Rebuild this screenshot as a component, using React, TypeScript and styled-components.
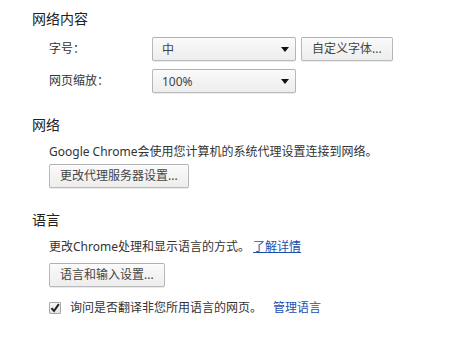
import styled, { createGlobalStyle } from "styled-components";

const GlobalStyle = createGlobalStyle`
  body {
    margin: 0;
    background: #fff;
    font-family: "Noto Sans", "Noto Sans CJK SC", sans-serif;
    font-size: 12px;
    color: #333;
  }
`;

const App = () => {
  return (
    <Page>
      <GlobalStyle />
      <Section>
        <Heading>网络内容</Heading>
        <FormGrid>
          <Label>字号：</Label>
          <Controls>
            <Select $width={144}>
              <span>中</span>
              <Arrow />
            </Select>
            <Button>自定义字体...</Button>
          </Controls>
          <Label>网页缩放：</Label>
          <Controls>
            <Select $width={144}>
              <span>100%</span>
              <Arrow />
            </Select>
          </Controls>
        </FormGrid>
      </Section>

      <Section>
        <Heading>网络</Heading>
        <Body>
          <Text>Google Chrome会使用您计算机的系统代理设置连接到网络。</Text>
          <Button $top={3}>更改代理服务器设置...</Button>
        </Body>
      </Section>

      <Section>
        <Heading>语言</Heading>
        <Body>
          <Text>
            更改Chrome处理和显示语言的方式。 <Link $underline>了解详情</Link>
          </Text>
          <Button $top={7}>语言和输入设置...</Button>
          <CheckRow>
            <CheckBox>
              <svg width="10" height="10" viewBox="0 0 10 10">
                <path d="M1.5 5.2 L4 8 L8.8 1.2" fill="none" stroke="#222" strokeWidth="2" />
              </svg>
            </CheckBox>
            <span>询问是否翻译非您所用语言的网页。</span>
            <Link $gap={11}>管理语言</Link>
          </CheckRow>
        </Body>
      </Section>
    </Page>
  );
};

const Page = styled.div`
  display: flex;
  flex-direction: column;
  gap: 23px;
  padding: 10px 0 0 32px;
`;

const Section = styled.section`
  display: flex;
  flex-direction: column;
`;

const Heading = styled.h3`
  margin: 0;
  height: 18px;
  line-height: 18px;
  font-size: 14px;
  font-weight: normal;
  color: #222;
`;

const FormGrid = styled.div`
  display: grid;
  grid-template-columns: 103px auto;
  row-gap: 8px;
  align-items: center;
  margin: 9px 0 0 17px;
`;

const Label = styled.span`
  line-height: 18px;
  color: #333;
`;

const Controls = styled.div`
  display: flex;
  gap: 5px;
`;

const controlSkin = `
  box-sizing: border-box;
  height: 24px;
  border: 1px solid rgba(0, 0, 0, 0.25);
  border-radius: 2px;
  background: linear-gradient(#fafafa, #ededed);
  box-shadow: 0 1px 0 rgba(0, 0, 0, 0.08), inset 0 1px 2px rgba(255, 255, 255, 0.75);
  font-family: inherit;
  font-size: 12px;
  color: #444;
`;

const Select = styled.div<{ $width: number }>`
  ${controlSkin}
  width: ${({ $width }) => $width}px;
  display: flex;
  align-items: center;
  justify-content: space-between;
  padding: 0 6px 0 9px;
`;

const Arrow = styled.span`
  width: 0;
  height: 0;
  border-left: 4px solid transparent;
  border-right: 4px solid transparent;
  border-top: 5px solid #111;
`;

const Button = styled.button<{ $top?: number }>`
  ${controlSkin}
  align-self: flex-start;
  margin-top: ${({ $top }) => $top ?? 0}px;
  padding: 0 10px;
  line-height: 22px;
`;

const Body = styled.div`
  display: flex;
  flex-direction: column;
  margin: 9px 0 0 17px;
`;

const Text = styled.p`
  margin: 0;
  height: 18px;
  line-height: 18px;
  color: #333;
`;

const Link = styled.a<{ $underline?: boolean; $gap?: number }>`
  margin-left: ${({ $gap }) => $gap ?? 0}px;
  color: #1a4fb0;
  text-decoration: ${({ $underline }) => ($underline ? "underline" : "none")};
  cursor: pointer;
`;

const CheckRow = styled.label`
  display: flex;
  align-items: center;
  margin-top: 12px;
  height: 18px;
  line-height: 18px;
  color: #333;
`;

const CheckBox = styled.span`
  box-sizing: border-box;
  width: 12px;
  height: 12px;
  margin-right: 9px;
  display: flex;
  align-items: center;
  justify-content: center;
  border: 1px solid #a8a8a8;
  border-radius: 1px;
  background: linear-gradient(#f8f8f8, #e4e4e4);
`;

export default App;
